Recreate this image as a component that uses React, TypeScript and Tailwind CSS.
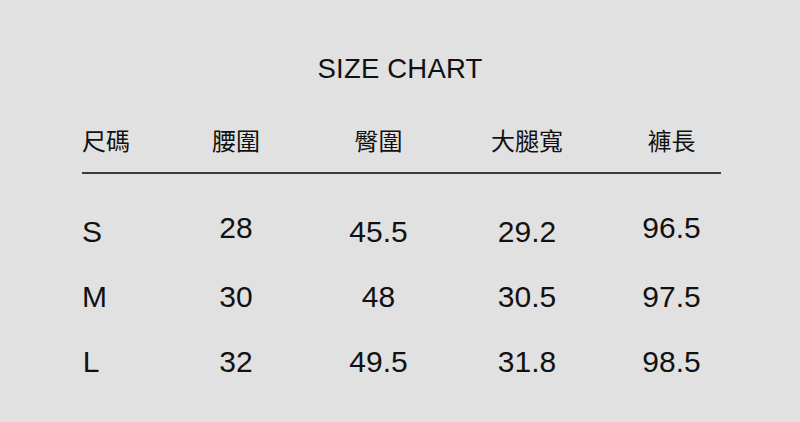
import React from "react";

const headers = ["尺碼", "腰圍", "臀圍", "大腿寬", "褲長"];

type Cell = { v: string; up?: boolean };
const rows: Cell[][] = [
  [{ v: "S" }, { v: "28", up: true }, { v: "45.5" }, { v: "29.2" }, { v: "96.5", up: true }],
  [{ v: "M" }, { v: "30" }, { v: "48" }, { v: "30.5" }, { v: "97.5" }],
  [{ v: "L" }, { v: "32" }, { v: "49.5" }, { v: "31.8" }, { v: "98.5" }],
];

const cols = "grid grid-cols-[89px_130px_155px_142px_147px] ml-[82px]";

export default function App() {
  return (
    <div className="w-[800px] h-[422px] bg-[#e1e1e1] text-[#111] flex flex-col overflow-hidden">
      <div
        className="pt-[55px] text-center text-[27.5px] leading-[27px] tracking-[0.2px]"
        style={{ fontFamily: '"Liberation Sans", Arial, sans-serif' }}
      >
        SIZE CHART
      </div>

      <div
        className={`${cols} mt-[46px] text-[24px] leading-[24px] h-[24px]`}
        style={{ fontFamily: '"Noto Sans CJK TC", "Noto Sans CJK SC", sans-serif' }}
      >
        {headers.map((h, i) => (
          <div key={h} className={i === 0 ? "text-left whitespace-nowrap" : "text-center whitespace-nowrap"}>
            {h}
          </div>
        ))}
      </div>

      <div className="ml-[82px] w-[639px] h-[2px] mt-[20px] bg-[#3c3c3c]" />

      <div
        className="mt-[43px] flex flex-col text-[30px] leading-[30px]"
        style={{ fontFamily: '"Liberation Sans", Arial, sans-serif' }}
      >
        {rows.map((r, ri) => (
          <div key={ri} className={`${cols} h-[65px]`}>
            {r.map((c, ci) => (
              <div key={ci} className={ci === 0 ? "text-left" : "text-center"}>
                {ci === 0 ? (
                  <div className="w-[18px] text-center">{c.v}</div>
                ) : (
                  <div className={c.up ? "-translate-y-1" : ""}>{c.v}</div>
                )}
              </div>
            ))}
          </div>
        ))}
      </div>
    </div>
  );
}
